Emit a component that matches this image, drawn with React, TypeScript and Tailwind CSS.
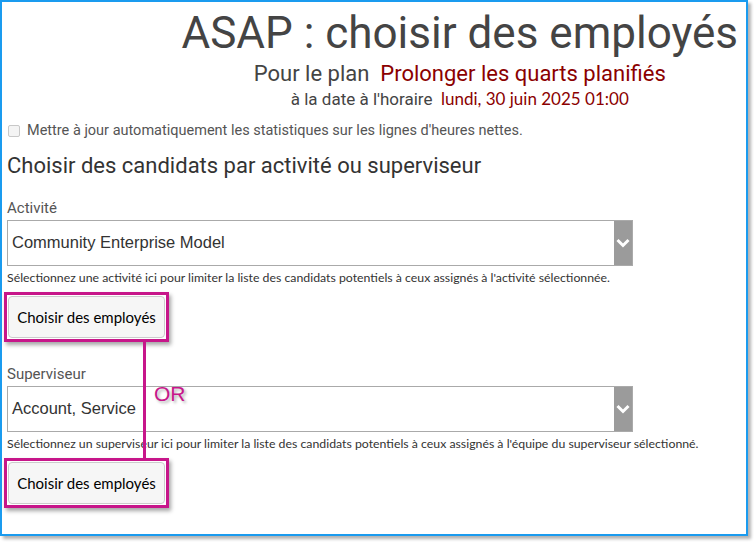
import type { ReactNode } from 'react'

const roboto = "font-['Roboto',sans-serif]"
const segoe = "font-['Lato',sans-serif]"

function Chevron() {
  return (
    <svg width="14" height="10" viewBox="0 0 14 10" className="block">
      <path d="M1.5 2 L7 7.5 L12.5 2" fill="none" stroke="white" strokeWidth="3" />
    </svg>
  )
}

function FakeSelect({ value }: { value: string }) {
  return (
    <div className="flex h-[46px] w-[626px] border border-[#aaaaaa] bg-white">
      <div className="flex flex-1 items-center pl-[4px] font-['Liberation_Sans',Arial,sans-serif] text-[16.5px] text-[#333]">
        {value}
      </div>
      <div className="flex w-[18px] items-center justify-center bg-[#9b9b9b]">
        <Chevron />
      </div>
    </div>
  )
}

function Highlighted({ children }: { children: ReactNode }) {
  return (
    <div className="w-[165px] border-[3px] border-[#c7168a] p-[1px] shadow-[2px_3px_4px_rgba(0,0,0,0.35)]">
      {children}
    </div>
  )
}

function PickButton() {
  return (
    <button
      className={`h-[42px] w-full rounded-[4px] border border-[#cccccc] bg-[#f6f6f6] text-[15px] text-black ${segoe}`}
    >
      Choisir des employés
    </button>
  )
}

export default function App() {
  return (
    <div className="h-[544px] w-[756px] bg-white">
      <div className="relative h-[536px] w-[748px] border-[2.5px] border-[#1a9bef] bg-white shadow-[3px_3px_3px_rgba(0,0,0,0.3)]">
        <header className="flex justify-end pr-[8px]">
          <div className={`text-center text-[#444] ${roboto}`}>
            <h1 className="mt-[4px] text-[44px] leading-[54px]">ASAP : choisir des employés</h1>
            <p className="text-[22px] leading-[28px]">
              Pour le plan&nbsp; <span className="text-[#8b0000]">Prolonger les quarts planifiés</span>
            </p>
            <p className="text-[17px] leading-[22px]">
              à la date à l'horaire&nbsp;{' '}
              <span className={`text-[#8b0000] ${segoe}`}>lundi, 30 juin 2025 01:00</span>
            </p>
          </div>
        </header>

        <div className="px-[5px]">
          <label className={`mt-[10px] flex items-center gap-[7px] text-[14.5px] text-[#555] ${roboto}`}>
            <span className="ml-[1px] h-[12px] w-[12px] rounded-[2px] border border-[#c8c8c8] bg-[#f4f4f4]" />
            Mettre à jour automatiquement les statistiques sur les lignes d'heures nettes.
          </label>

          <h2 className={`mt-[10px] text-[22px] leading-[28px] text-[#333] ${roboto}`}>
            Choisir des candidats par activité ou superviseur
          </h2>

          <div className={`mt-[18px] text-[15px] leading-[20px] text-[#555] ${roboto}`}>Activité</div>
          <div className="mt-[2px]">
            <FakeSelect value="Community Enterprise Model" />
          </div>
          <p className={`mt-[4px] text-[12.3px] leading-[16px] text-[#333] ${segoe}`}>
            Sélectionnez une activité ici pour limiter la liste des candidats potentiels à ceux assignés à
            l'activité sélectionnée.
          </p>
          <div className="-ml-[3px] mt-[6px]">
            <Highlighted>
              <PickButton />
            </Highlighted>
          </div>

          <div className={`mt-[22px] text-[15px] leading-[20px] text-[#555] ${roboto}`}>Superviseur</div>
          <div className="mt-[2px]">
            <FakeSelect value="Account, Service" />
          </div>
          <p className={`mt-[4px] text-[12.3px] leading-[16px] text-[#333] ${segoe}`}>
            Sélectionnez un superviseur ici pour limiter la liste des candidats potentiels à ceux assignés à
            l'équipe du superviseur sélectionné.
          </p>
          <div className="-ml-[3px] mt-[6px]">
            <Highlighted>
              <PickButton />
            </Highlighted>
          </div>
        </div>

        {/* annotation: connector between the two highlighted buttons */}
        <div className="absolute left-[141px] top-[339px] h-[118px] w-[3px] bg-[#c7168a]" />
        <div className="absolute left-[152px] top-[376px] font-['Liberation_Sans',Arial,sans-serif] text-[21px] text-[#c7168a] [text-shadow:2px_2px_3px_rgba(0,0,0,0.3)]">
          OR
        </div>
      </div>
    </div>
  )
}
